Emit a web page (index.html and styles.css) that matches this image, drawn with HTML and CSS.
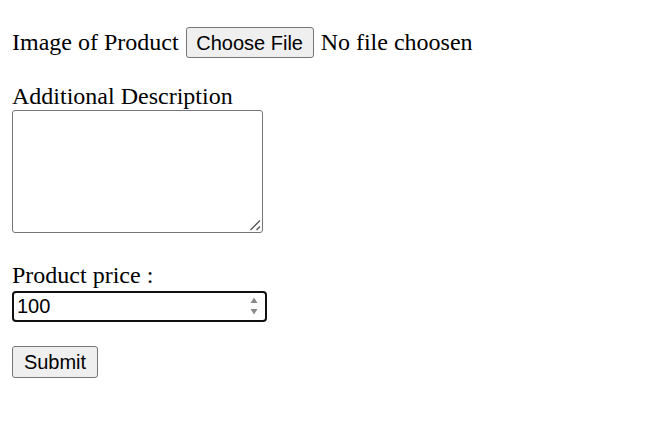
FILE: index.html
```html
<!DOCTYPE html>
<html>
<head>
<meta charset="utf-8">
<link rel="stylesheet" href="styles.css">
</head>
<body>
<form class="form">
  <div class="row-file">
    <span class="text">Image of Product</span>
    <button type="button" class="btn">Choose File</button>
    <span class="text">No file choosen</span>
  </div>
  <div class="row-desc">
    <label class="text label">Additional Description</label>
    <div class="area-wrap">
      <textarea class="area"></textarea>
      <svg class="grip" width="12" height="12" viewBox="0 0 12 12"><path d="M1.5 11 L11 1.5 M7.5 11 L11 7.5" stroke="#5a5a5a" stroke-width="1.4" fill="none"/></svg>
    </div>
  </div>
  <div class="row-price">
    <label class="text label">Product price :</label>
    <div class="num-wrap">
      <input class="num" type="text" value="100">
      <svg class="spin" width="10" height="20" viewBox="0 0 10 20"><path d="M5 1.5 L8.5 7 L1.5 7 Z M5 18.5 L8.5 13 L1.5 13 Z" fill="#8a8a8a"/></svg>
    </div>
  </div>
  <div class="row-submit">
    <button type="submit" class="btn btn-submit">Submit</button>
  </div>
</form>
</body>
</html>
```

FILE: styles.css
```css
html, body {
  margin: 0;
  padding: 0;
  background: #ffffff;
}

.form {
  padding: 0 12px;
  font-family: "Liberation Serif", "Times New Roman", serif;
  font-size: 24px;
  color: #000000;
}

.text {
  line-height: 28px;
}

.label {
  display: block;
}

.row-file {
  display: flex;
  align-items: baseline;
  gap: 7px;
  padding-top: 27px;
}

.btn {
  font-family: "Liberation Sans", Arial, sans-serif;
  font-size: 20px;
  color: #000000;
  background: #efefef;
  border: 1px solid #767676;
  border-radius: 3px;
  height: 31px;
  width: 128px;
  padding: 0;
  margin: 0;
  line-height: 30px;
}

.row-desc {
  margin-top: 24px;
}

.area-wrap {
  position: relative;
  width: 251px;
  height: 123px;
}

.area {
  display: block;
  box-sizing: border-box;
  width: 251px;
  height: 123px;
  margin: 0;
  border: 1px solid #767676;
  border-radius: 3px;
  resize: none;
  background: #ffffff;
}

.grip {
  position: absolute;
  right: 2px;
  bottom: 2px;
}

.row-price {
  margin-top: 28px;
}

.num-wrap {
  position: relative;
  width: 255px;
  height: 31px;
  margin-top: 2px;
}

.num {
  display: block;
  box-sizing: border-box;
  width: 255px;
  height: 31px;
  margin: 0;
  padding: 1px 3px;
  border: 2px solid #101010;
  border-radius: 4px;
  outline: none;
  font-family: "Liberation Sans", Arial, sans-serif;
  font-size: 20px;
  color: #000000;
  background: #ffffff;
}

.spin {
  position: absolute;
  right: 8px;
  top: 5px;
}

.row-submit {
  margin-top: 24px;
}

.btn-submit {
  width: 86px;
  height: 32px;
  line-height: 31px;
}
```
